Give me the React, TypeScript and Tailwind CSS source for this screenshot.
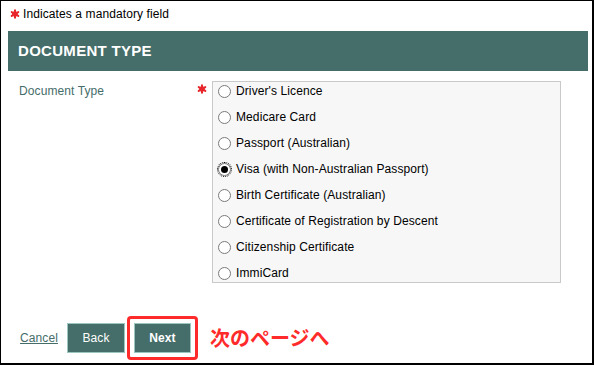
import React from "react";

const options = [
  "Driver's Licence",
  "Medicare Card",
  "Passport (Australian)",
  "Visa (with Non-Australian Passport)",
  "Birth Certificate (Australian)",
  "Certificate of Registration by Descent",
  "Citizenship Certificate",
  "ImmiCard",
];

function Star({ className = "" }: { className?: string }) {
  return (
    <svg width="10" height="10" viewBox="0 0 10 10" className={className}>
      <g fill="#e8262b">
        <circle cx="5" cy="5" r="2.8" />
        <rect x="4" y="0.2" width="2" height="9.6" rx="1" />
        <rect x="4" y="0.2" width="2" height="9.6" rx="1" transform="rotate(60 5 5)" />
        <rect x="4" y="0.2" width="2" height="9.6" rx="1" transform="rotate(-60 5 5)" />
      </g>
    </svg>
  );
}

function Radio({ checked }: { checked?: boolean }) {
  return (
    <span className="relative flex h-[13px] w-[13px] items-center justify-center rounded-full border border-[#7a7a7a] bg-white">
      {checked && (
        <>
          <span className="absolute -inset-[2px] rounded-full border border-dotted border-black" />
          <span className="h-[7px] w-[7px] rounded-full bg-black" />
        </>
      )}
    </span>
  );
}

export default function App() {
  return (
    <div
      className="flex h-[365px] w-[594px] flex-col border-l border-t border-r-2 border-b-2 border-black bg-white text-[12px] tracking-[0.1px] text-black"
      style={{ fontFamily: '"Liberation Sans", Arial, sans-serif' }}
    >
      <div className="flex h-[25px] items-center gap-[3px] pl-[9px]">
        <Star />
        <span className="leading-none">Indicates a mandatory field</span>
      </div>
      <div className="ml-[7px] mr-[4px] mt-[5px] flex h-[40px] items-center bg-[#456d69] pl-[10px]">
        <span className="text-[15px] font-bold tracking-[0.3px] text-white">DOCUMENT TYPE</span>
      </div>
      <div className="mt-[10px] flex">
        <div className="w-[196px] pl-[18px] pt-[1px] text-[#456d69]">Document Type</div>
        <div className="w-[15px] pt-[3px]">
          <Star />
        </div>
        <div className="flex h-[202px] w-[349px] flex-col gap-[10px] border border-[#c9c9c9] bg-[#f7f7f7] pl-[5px] pt-[1px]">
          {options.map((o, i) => (
            <div key={o} className="flex h-[16px] items-center gap-[5px]">
              <Radio checked={i === 3} />
              <span className="leading-none">{o}</span>
            </div>
          ))}
        </div>
      </div>
      <div className="mt-[33px] flex items-center pl-[19px]">
        <a className="text-[#456d69] underline">Cancel</a>
        <button className="ml-[9px] h-[30px] w-[58px] border border-[#9cc7c1] bg-[#456d69] text-white">
          Back
        </button>
        <div className="ml-[2px] rounded-[4px] border-[3px] border-[#ff2a2a] p-[4px]">
          <button className="h-[30px] w-[57px] border border-[#9cc7c1] bg-[#456d69] font-bold text-white">
            Next
          </button>
        </div>
        <span
          className="ml-[12px] text-[20px] font-bold tracking-normal text-[#ff2a2a]"
          style={{ fontFamily: '"Noto Sans CJK JP", sans-serif' }}
        >
          次のページへ
        </span>
      </div>
    </div>
  );
}
